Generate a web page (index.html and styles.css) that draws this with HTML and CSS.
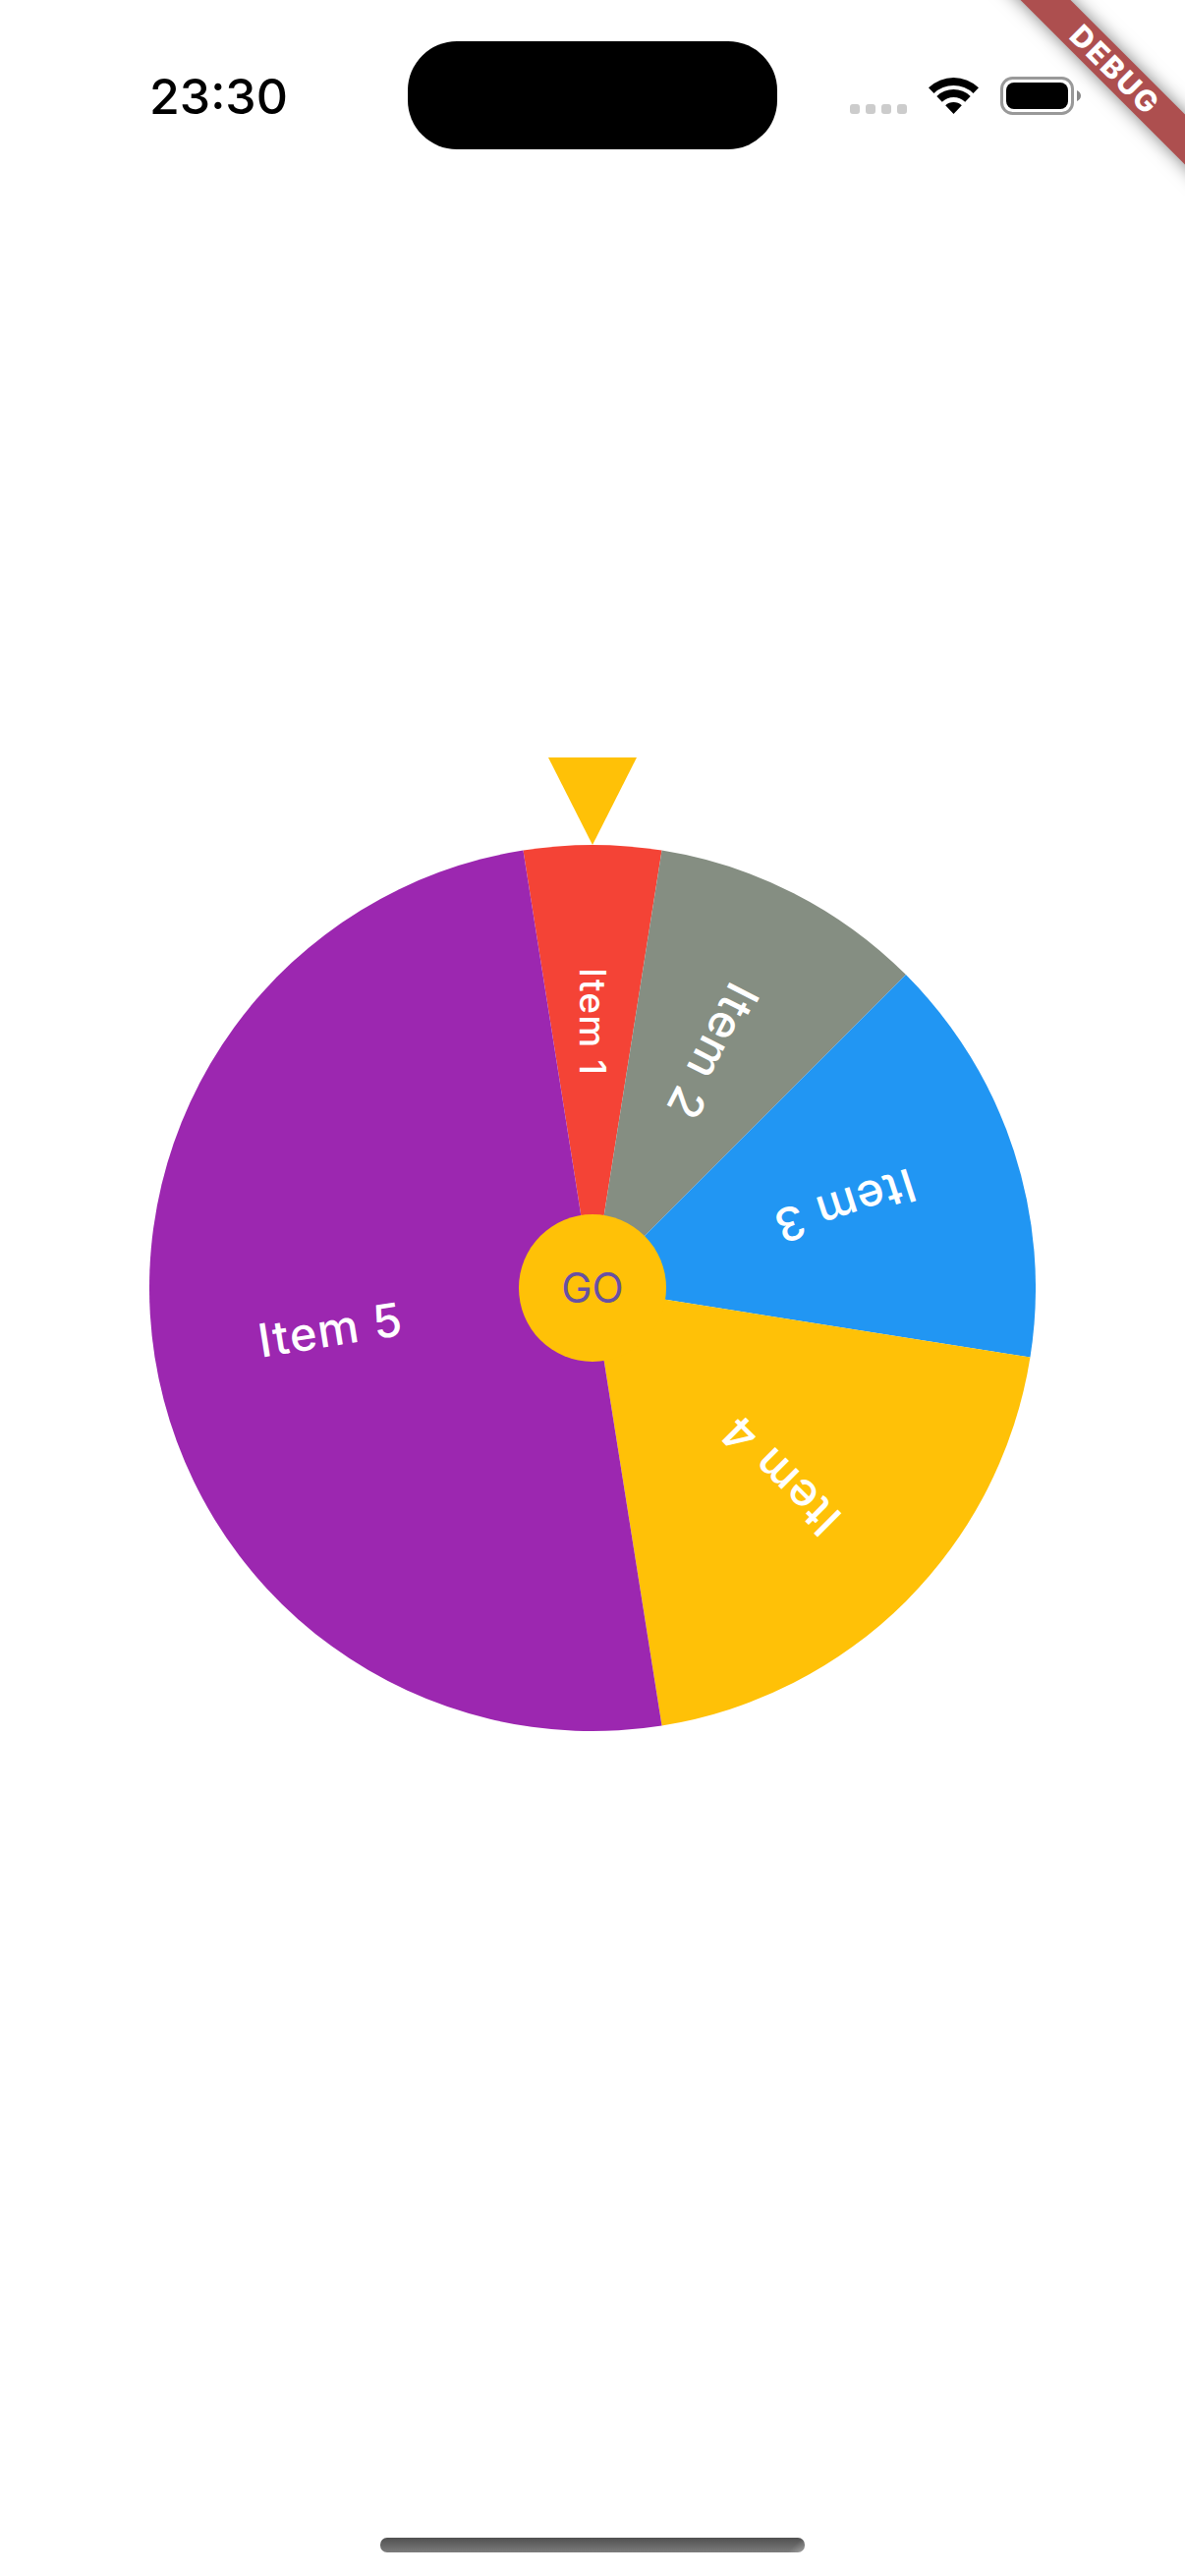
FILE: index.html
```html
<!DOCTYPE html>
<html>
<head>
<title>Spin Wheel</title>
<meta charset="utf-8">
<link rel="stylesheet" href="styles.css">
</head>
<body>

<div class="phone">

    <div class="statusbar">
        <div class="clock">23:30</div>
        <div class="island"></div>
        <div class="sysicons">
            <div class="dots">
                <span class="dot"></span>
                <span class="dot"></span>
                <span class="dot"></span>
                <span class="dot"></span>
            </div>
            <svg class="wifi" viewBox="0 0 51 37" width="51" height="37">
                <path d="M0 10.2A37 37 0 0 1 51 10.2L45.5 16A29 29 0 0 0 5.5 16Z"/>
                <path d="M8.3 18.9A25 25 0 0 1 42.7 18.9L37.2 24.7A17 17 0 0 0 13.8 24.7Z"/>
                <path d="M17.2 28.3A12 12 0 0 1 33.8 28.3L25.5 37Z"/>
            </svg>
            <svg class="battery" viewBox="0 0 82 39" width="82" height="39">
                <rect class="batt-shell" x="1.5" y="1.5" width="72" height="36" rx="11"/>
                <rect x="6" y="6" width="63" height="27" rx="8"/>
                <path class="batt-cap" d="M78 14C80.500 15 82 17 82 19.500C82 22 80.500 24 78 25Z"/>
            </svg>
        </div>
    </div>

    <div class="stage">
        <svg class="wheel" viewBox="0 0 902 992" width="902" height="992">
            <polygon class="amber" points="406,0 496,0 451,89"/>

            <path class="red" d="M451 540L380.45 94.55A451 451 0 0 1 521.55 94.55Z"/>
            <path class="grey" d="M451 540L521.55 94.55A451 451 0 0 1 769.91 221.09Z"/>
            <path class="blue" d="M451 540L769.91 221.09A451 451 0 0 1 896.45 610.55Z"/>
            <path class="amber" d="M451 540L896.45 610.55A451 451 0 0 1 521.55 985.45Z"/>
            <path class="purple" d="M451 540L521.55 985.45A451 451 0 0 1 380.45 94.55Z"/>

            <text class="label label-small" y="13" transform="translate(451 269) rotate(90)">Item 1</text>
            <text class="label" y="17" transform="translate(573.58 299.43) rotate(117)">Item 2</text>
            <text class="label" y="17" transform="translate(707.79 456.56) rotate(162)">Item 3</text>
            <text class="label" y="17" transform="translate(641.92 730.92) rotate(225)">Item 4</text>
            <text class="label" y="17" transform="translate(184.32 582.24) rotate(351)">Item 5</text>

            <circle class="amber" cx="451" cy="540" r="75"/>
            <text class="go" x="451" y="555">GO</text>
        </svg>
    </div>

    <div class="homebar"></div>

    <div class="debug">DEBUG</div>

</div>

</body>
</html>
```

FILE: styles.css
```css
body {
    margin: 0;
    background-color: white;
    font-family: Inter, "Noto Sans", sans-serif;
}

.phone {
    position: relative;
    display: flex;
    flex-direction: column;
    width: 1206px;
    height: 2622px;
    overflow: hidden;
    background-color: white;
}

/* status bar */
.statusbar {
    display: flex;
    align-items: flex-start;
    height: 110px;
    padding-top: 42px;
    padding-left: 152px;
}

.clock {
    width: 263px;
    margin-top: 34px;
    font-size: 50px;
    line-height: 44px;
    font-weight: 500;
    color: black;
}

.island {
    width: 376px;
    height: 110px;
    border-radius: 50px;
    background-color: black;
}

.sysicons {
    display: flex;
    align-items: flex-start;
    margin-left: 74px;
    margin-top: 36px;
}

.dots {
    display: flex;
    gap: 6px;
    margin-top: 28px;
}

.dot {
    width: 10px;
    height: 10px;
    border-radius: 3px;
    background-color: #cccccc;
}

.wifi {
    margin-left: 22px;
    margin-top: 1px;
}

.battery {
    margin-left: 22px;
}

.batt-shell {
    fill: none;
    stroke: #999999;
    stroke-width: 3;
}

.batt-cap {
    fill: #888888;
}

/* wheel */
.stage {
    display: flex;
    justify-content: center;
    margin-top: 619px;
}

.wheel {
    display: block;
}

.red { fill: #f44336; }
.grey { fill: #858e82; }
.blue { fill: #2196f3; }
.amber { fill: #ffc107; }
.purple { fill: #9c27b0; }

.label {
    fill: white;
    font-size: 47px;
    font-weight: 500;
    letter-spacing: 1.4px;
    text-anchor: middle;
}

.label-small {
    font-size: 37px;
    letter-spacing: 1.2px;
}

.go {
    fill: #6750a4;
    font-size: 42px;
    text-anchor: middle;
}

/* home indicator */
.homebar {
    width: 432px;
    height: 15px;
    margin: auto auto 24px auto;
    border-radius: 7px;
    background: linear-gradient(135deg, transparent 96%, rgba(255, 255, 255, 0.3)), linear-gradient(#505050, #7c7c7c);
}

/* debug ribbon */
.debug {
    position: absolute;
    top: 53px;
    left: 935px;
    width: 400px;
    height: 36px;
    transform: rotate(45deg);
    background-color: #ad4f4f;
    box-shadow: 0 0 18px rgba(0, 0, 0, 0.5);
    color: white;
    font-size: 30px;
    font-weight: 800;
    letter-spacing: 2px;
    line-height: 36px;
    text-align: center;
}
```
